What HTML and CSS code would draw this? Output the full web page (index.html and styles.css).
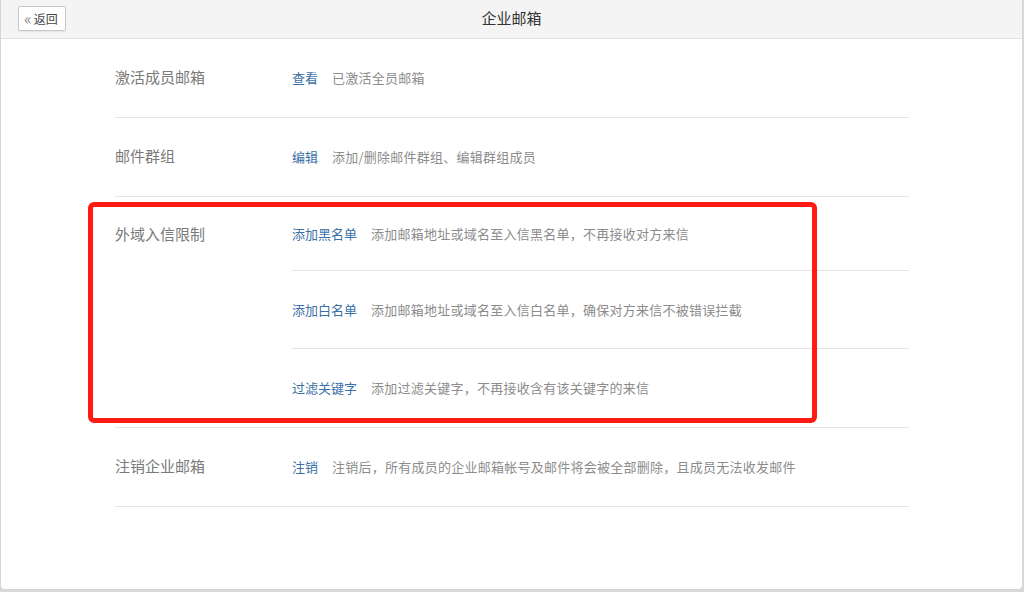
FILE: index.html
```html
<!DOCTYPE html>
<html lang="zh-CN">
<head>
<meta charset="utf-8">
<title>企业邮箱</title>
<link rel="stylesheet" href="styles.css">
</head>
<body>
<div class="frame">
  <header class="topbar">
    <button class="back"><span class="chev">&laquo;</span>返回</button>
    <h1 class="title">企业邮箱</h1>
  </header>
  <main class="content">
    <section class="row">
      <div class="label">激活成员邮箱</div>
      <div class="items">
        <div class="item"><a class="link">查看</a><span class="desc">已激活全员邮箱</span></div>
      </div>
    </section>
    <section class="row">
      <div class="label">邮件群组</div>
      <div class="items">
        <div class="item"><a class="link">编辑</a><span class="desc">添加/删除邮件群组、编辑群组成员</span></div>
      </div>
    </section>
    <section class="row multi">
      <div class="label">外域入信限制</div>
      <div class="items">
        <div class="item"><a class="link">添加黑名单</a><span class="desc">添加邮箱地址或域名至入信黑名单，不再接收对方来信</span></div>
        <div class="item"><a class="link">添加白名单</a><span class="desc">添加邮箱地址或域名至入信白名单，确保对方来信不被错误拦截</span></div>
        <div class="item"><a class="link">过滤关键字</a><span class="desc">添加过滤关键字，不再接收含有该关键字的来信</span></div>
      </div>
    </section>
    <section class="row">
      <div class="label">注销企业邮箱</div>
      <div class="items">
        <div class="item"><a class="link">注销</a><span class="desc">注销后，所有成员的企业邮箱帐号及邮件将会被全部删除，且成员无法收发邮件</span></div>
      </div>
    </section>
  </main>
  <div class="highlight"></div>
</div>
</body>
</html>
```

FILE: styles.css
```css
html, body {
  margin: 0;
  padding: 0;
  background: #d9d9d9;
}
body {
  width: 1024px;
  height: 592px;
  font-family: "Microsoft YaHei", "Noto Sans CJK SC", "Noto Sans", sans-serif;
}
.frame {
  position: relative;
  box-sizing: border-box;
  width: 1023px;
  height: 590px;
  background: #fff;
  border: 1px solid #d6d6d6;
  border-top: none;
  border-radius: 0 0 5px 5px;
  overflow: hidden;
}
.topbar {
  height: 38px;
  background: #f4f4f4;
  border-bottom: 1px solid #dde3ea;
  display: flex;
  align-items: center;
  justify-content: center;
  position: relative;
}
.back {
  position: absolute;
  left: 17px;
  top: 6px;
  height: 25px;
  width: 48px;
  box-sizing: border-box;
  padding: 0 0 0 5px;
  display: flex;
  align-items: center;
  background: #fff;
  border: 1px solid #c8c8c8;
  border-radius: 2px;
  font-family: inherit;
  font-size: 12px;
  color: #444;
  box-shadow: 0 1px 1px rgba(0,0,0,0.06);
}
.chev {
  color: #8a8a8a;
  font-size: 16px;
  margin-right: 2px;
  line-height: 1;
  margin-top: -2px;
}
.title {
  margin: -3px 0 0;
  font-size: 15px;
  font-weight: normal;
  color: #333;
}
.content {
  margin-left: 114px;
  width: 794px;
}
.row {
  display: flex;
  border-bottom: 1px solid #e6e6e6;
}
.label {
  width: 177px;
  flex: none;
  line-height: 76px;
  height: 78px;
  font-size: 15px;
  color: #7a7a7a;
}
.items {
  flex: 1;
}
.item {
  height: 78px;
  display: flex;
  align-items: center;
  font-size: 13px;
  padding-bottom: 1px;
  box-sizing: border-box;
}
.multi .label {
  line-height: 74px;
}
.multi .item:first-child {
  height: 73px;
}
.multi .item + .item {
  border-top: 1px solid #e6e6dc;
  height: 78px;
}
.multi .item:last-child {
  height: 79px;
}
.link {
  color: #3a70a6;
  margin-right: 14px;
  cursor: pointer;
}
.desc {
  color: #8c8c8c;
  letter-spacing: 0.25px;
}
.highlight {
  position: absolute;
  left: 87px;
  top: 202px;
  width: 729px;
  height: 221px;
  box-sizing: border-box;
  border: 5px solid #ff1a14;
  border-radius: 6px;
  pointer-events: none;
}
```
